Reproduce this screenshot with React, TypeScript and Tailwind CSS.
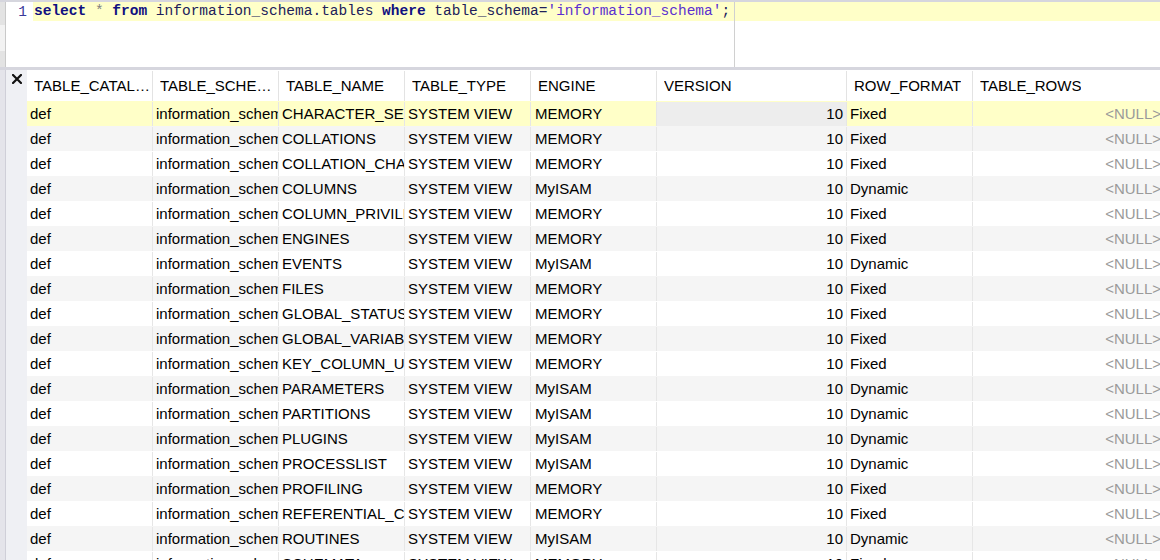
import React from "react";

type Row = { name: string; engine: string; format: string };

const rows: Row[] = [
  { name: "CHARACTER_SETS", engine: "MEMORY", format: "Fixed" },
  { name: "COLLATIONS", engine: "MEMORY", format: "Fixed" },
  { name: "COLLATION_CHARACTER_SET_APPLICABILITY", engine: "MEMORY", format: "Fixed" },
  { name: "COLUMNS", engine: "MyISAM", format: "Dynamic" },
  { name: "COLUMN_PRIVILEGES", engine: "MEMORY", format: "Fixed" },
  { name: "ENGINES", engine: "MEMORY", format: "Fixed" },
  { name: "EVENTS", engine: "MyISAM", format: "Dynamic" },
  { name: "FILES", engine: "MEMORY", format: "Fixed" },
  { name: "GLOBAL_STATUS", engine: "MEMORY", format: "Fixed" },
  { name: "GLOBAL_VARIABLES", engine: "MEMORY", format: "Fixed" },
  { name: "KEY_COLUMN_USAGE", engine: "MEMORY", format: "Fixed" },
  { name: "PARAMETERS", engine: "MyISAM", format: "Dynamic" },
  { name: "PARTITIONS", engine: "MyISAM", format: "Dynamic" },
  { name: "PLUGINS", engine: "MyISAM", format: "Dynamic" },
  { name: "PROCESSLIST", engine: "MyISAM", format: "Dynamic" },
  { name: "PROFILING", engine: "MEMORY", format: "Fixed" },
  { name: "REFERENTIAL_CONSTRAINTS", engine: "MEMORY", format: "Fixed" },
  { name: "ROUTINES", engine: "MyISAM", format: "Dynamic" },
  { name: "SCHEMATA", engine: "MEMORY", format: "Fixed" },
  { name: "SCHEMA_PRIVILEGES", engine: "MEMORY", format: "Fixed" },
];

const headers = [
  { label: "TABLE_CATALOG", w: "w-[126px]" },
  { label: "TABLE_SCHEMA", w: "w-[126px]" },
  { label: "TABLE_NAME", w: "w-[126px]" },
  { label: "TABLE_TYPE", w: "w-[126px]" },
  { label: "ENGINE", w: "w-[126px]" },
  { label: "VERSION", w: "w-[190px]" },
  { label: "ROW_FORMAT", w: "w-[126px]" },
  { label: "TABLE_ROWS", w: "w-[192px]" },
];

// header text gets an ellipsis, cell text is just clipped
function HeaderCell({ label, w }: { label: string; w: string }) {
  return (
    <div className={`${w} shrink-0 h-full flex items-center pl-[7px] pr-[1px] border-r border-[#e3e3e3] overflow-hidden`}>
      <span className="truncate">{label}</span>
    </div>
  );
}

function Cell({
  w,
  children,
  right,
  className = "",
}: {
  w: string;
  children: React.ReactNode;
  right?: boolean;
  className?: string;
}) {
  return (
    <div
      className={`${w} shrink-0 h-full flex items-center border-r border-[#e6e6e6] overflow-hidden whitespace-nowrap ${
        right ? "justify-end pr-[3px]" : "pl-[3px]"
      } ${className}`}
    >
      {children}
    </div>
  );
}

function Editor() {
  return (
    <div className="h-[70px] flex border-t-2 border-b-[3px] border-[#d6d6de] bg-white">
      <div className="w-[5px] flex flex-col bg-[#e3e3e3]">
        <div className="h-[23px]" />
        <div className="h-[26px] bg-[#f2f2f2]" />
      </div>
      <div className="w-px bg-[#c9c9c9]" />
      <div className="w-[27px] flex justify-end pr-[6px] pt-[1px] font-['Liberation_Mono',monospace] text-[14.5px] leading-[19px] text-[#3a3a9a]">
        1
      </div>
      <div className="flex-1 relative">
        <div className="h-[19px] bg-[#ffffc8] pl-px font-['Liberation_Mono',monospace] text-[14.5px] leading-[19px] whitespace-pre text-[#20205a]">
          <span className="font-bold text-[#101080]">select</span>
          <span className="text-[#808080]"> * </span>
          <span className="font-bold text-[#101080]">from</span>
          <span> information_schema.tables </span>
          <span className="font-bold text-[#101080]">where</span>
          <span> table_schema=</span>
          <span className="text-[#5a30d0]">'information_schema'</span>
          <span>;</span>
        </div>
        <div className="absolute left-[701px] top-0 bottom-0 w-px bg-[#d0d0d0]" />
      </div>
    </div>
  );
}

export default function App() {
  return (
    <div className="w-[1160px] h-[560px] overflow-hidden bg-white font-['Liberation_Sans',Arial,sans-serif] text-[15px] text-black">
      <Editor />
      <div className="flex h-[490px]">
        <div className="w-[27px] shrink-0 flex">
          <div className="w-[5px] bg-[#e4e4ea]" />
          <div className="w-px bg-[#cfcfd8]" />
          <div className="flex-1 bg-[#eff0f4] pt-[4px] pl-[6px]">
            <svg width="10" height="10" viewBox="0 0 10 10">
              <path d="M1 1 L9 9 M9 1 L1 9" stroke="#111" strokeWidth="2.2" strokeLinecap="square" />
            </svg>
          </div>
        </div>
        <div className="flex-1 overflow-hidden">
          <div className="h-[31px] flex bg-white pt-[1px]">
            {headers.map((h) => (
              <HeaderCell key={h.label} label={h.label} w={h.w} />
            ))}
          </div>
          {rows.map((r, i) => {
            const selected = i === 0;
            const bg = selected ? "bg-[#ffffc8]" : i % 2 === 1 ? "bg-[#f5f5f5]" : "bg-white";
            return (
              <div key={r.name} className={`h-[25px] flex pt-[1px] ${bg}`}>
                <Cell w="w-[126px]">def</Cell>
                <Cell w="w-[126px]">information_schema</Cell>
                <Cell w="w-[126px]">{r.name}</Cell>
                <Cell w="w-[126px]">SYSTEM VIEW</Cell>
                <Cell w="w-[126px]" className="pl-[4px]">{r.engine}</Cell>
                <Cell w="w-[190px]" right className={selected ? "bg-[#ededed]" : ""}>
                  10
                </Cell>
                <Cell w="w-[126px]">{r.format}</Cell>
                <Cell w="w-[192px]" right>
                  <span className="text-[#9a9a9a]">&lt;NULL&gt;</span>
                </Cell>
              </div>
            );
          })}
        </div>
      </div>
    </div>
  );
}
